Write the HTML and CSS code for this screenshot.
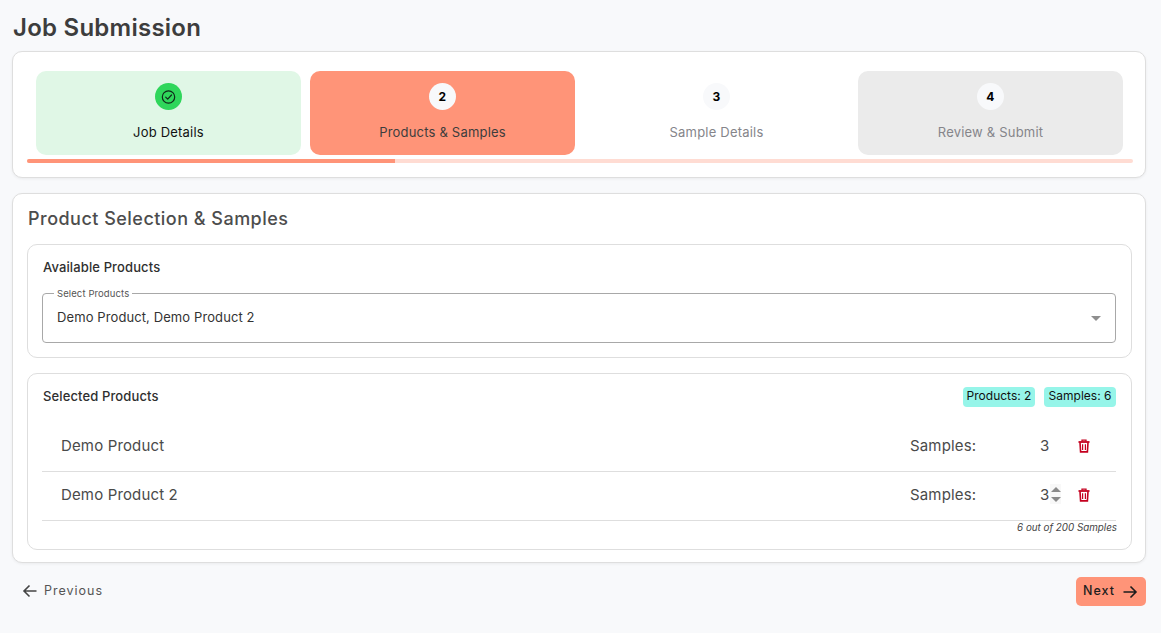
FILE: index.html
```html
<!DOCTYPE html>
<html lang="en">
<head>
    <meta charset="UTF-8">
    <meta name="viewport" content="width=device-width, initial-scale=1.0">
    <title>Job Submission</title>
    <link rel="stylesheet" href="styles.css">
</head>
<body>
    <h1 class="page-title">Job Submission</h1>

    <div class="card stepper-card">
        <div class="steps">
            <div class="step step-done">
                <span class="step-circle circle-done">
                    <svg width="16" height="16" viewBox="0 0 16 16" fill="none" stroke="#10291a" stroke-width="1.2">
                        <circle cx="7.5" cy="8" r="6.2"/>
                        <path d="M4.7 8.2l2 2 3.8-4.2" stroke-linecap="round" stroke-linejoin="round"/>
                    </svg>
                </span>
                <span class="step-label">Job Details</span>
            </div>
            <div class="step step-active">
                <span class="step-circle">2</span>
                <span class="step-label">Products &amp; Samples</span>
            </div>
            <div class="step">
                <span class="step-circle">3</span>
                <span class="step-label">Sample Details</span>
            </div>
            <div class="step step-grey">
                <span class="step-circle">4</span>
                <span class="step-label">Review &amp; Submit</span>
            </div>
        </div>
        <div class="progress"><div class="progress-fill"></div></div>
    </div>

    <div class="card main-card">
        <h2 class="section-title">Product Selection &amp; Samples</h2>

        <div class="panel available">
            <h3 class="panel-title">Available Products</h3>
            <fieldset class="select-box">
                <legend>Select Products</legend>
                <span class="select-value">Demo Product, Demo Product 2</span>
                <span class="select-arrow"></span>
            </fieldset>
        </div>

        <div class="panel selected">
            <div class="panel-head">
                <h3 class="panel-title">Selected Products</h3>
                <div class="chips">
                    <span class="chip">Products: 2</span>
                    <span class="chip">Samples: 6</span>
                </div>
            </div>

            <div class="product-row">
                <span class="product-name">Demo Product</span>
                <span class="samples-label">Samples:</span>
                <span class="samples-count">3</span>
                <svg class="trash" width="14" height="14" viewBox="0 0 14 14" fill="none" stroke="#c4001f" stroke-width="1.6">
                    <path d="M1.5 3h11" stroke-width="1.8"/>
                    <path d="M5 2.6V1.1h4v1.5" stroke-width="1.3"/>
                    <path d="M3 3.4l.6 9.5h6.8l.6-9.5"/>
                    <path d="M5.6 5.2v5.8M8.4 5.2v5.8" stroke-width="1.2"/>
                </svg>
            </div>
            <div class="product-row">
                <span class="product-name">Demo Product 2</span>
                <span class="samples-label">Samples:</span>
                <span class="samples-count">3<span class="spinner"><i class="spin-up"></i><i class="spin-down"></i></span></span>
                <svg class="trash" width="14" height="14" viewBox="0 0 14 14" fill="none" stroke="#c4001f" stroke-width="1.6">
                    <path d="M1.5 3h11" stroke-width="1.8"/>
                    <path d="M5 2.6V1.1h4v1.5" stroke-width="1.3"/>
                    <path d="M3 3.4l.6 9.5h6.8l.6-9.5"/>
                    <path d="M5.6 5.2v5.8M8.4 5.2v5.8" stroke-width="1.2"/>
                </svg>
            </div>
            <p class="samples-note">6 out of 200 Samples</p>
        </div>
    </div>

    <div class="nav-row">
        <button class="nav-btn prev-btn">
            <svg width="16" height="16" viewBox="0 0 16 16" fill="none" stroke="#444" stroke-width="1.6">
                <path d="M14.5 8H2M7.5 2.5L2 8l5.5 5.5"/>
            </svg>
            Previous
        </button>
        <button class="nav-btn next-btn">
            Next
            <svg width="16" height="16" viewBox="0 0 16 16" fill="none" stroke="#1d1d1d" stroke-width="1.6">
                <path d="M1.5 8H14M8.5 2.5L14 8l-5.5 5.5"/>
            </svg>
        </button>
    </div>
</body>
</html>
```

FILE: styles.css
```css
* {
    box-sizing: border-box;
}
body {
    font-family: Inter, "Open Sans", sans-serif;
    margin: 0;
    padding: 13px 15px 0 12px;
    background-color: #f8f9fb;
    color: #333;
    overflow: hidden;
}
.page-title {
    margin: 0 0 9px 1px;
    font-size: 24px;
    line-height: 29px;
    font-weight: 600;
    letter-spacing: 0.25px;
    color: #3d3d3d;
}
.card {
    background-color: #fff;
    border: 1px solid #dedede;
    border-radius: 10px;
    box-shadow: 0 1px 3px rgba(0, 0, 0, 0.06);
}
.stepper-card {
    height: 127px;
    padding: 19px 12px 0 14px;
    margin-bottom: 15px;
}
.steps {
    display: flex;
    gap: 9px;
    padding: 0 10px 0 9px;
}
.step {
    flex: 1;
    height: 84px;
    border-radius: 10px;
    display: flex;
    flex-direction: column;
    align-items: center;
    padding-top: 12px;
    color: #85858a;
    font-size: 13px;
    letter-spacing: 0.2px;
}
.step-done {
    background-color: #e0f7e6;
    color: #111;
}
.step-active {
    background-color: #ff9478;
    color: #3d3d3d;
}
.step-grey {
    background-color: #ebebeb;
}
.step-circle {
    width: 27px;
    height: 27px;
    border-radius: 50%;
    background-color: #f8f9fb;
    display: flex;
    align-items: center;
    justify-content: center;
    color: #000;
    font-size: 12px;
    font-weight: 700;
    margin-bottom: 14px;
}
.circle-done {
    background-color: #2fd65b;
}
.step-label {
    line-height: 16px;
}
.progress {
    height: 4px;
    margin-top: 4px;
    background-color: #ffdcd3;
    border-radius: 2px;
}
.progress-fill {
    width: 33.3%;
    height: 100%;
    background-color: #ff9478;
    border-radius: 2px 0 0 2px;
}
.main-card {
    height: 370px;
    padding: 13px 13px 0 14px;
}
.section-title {
    margin: 0 0 13px 1px;
    font-size: 18px;
    line-height: 24px;
    font-weight: 500;
    letter-spacing: 0.48px;
    color: #4d4d4d;
}
.panel {
    border: 1px solid #dedede;
    border-radius: 10px;
    padding: 0 15px 0 14px;
}
.available {
    height: 114px;
    padding-top: 13px;
    margin-bottom: 15px;
}
.panel-title {
    margin: 0 0 0 1px;
    font-size: 13px;
    line-height: 18px;
    font-weight: 500;
    letter-spacing: 0.12px;
    color: #2f2f2f;
}
.select-box {
    position: relative;
    margin: 0;
    margin-top: 12px;
    height: 55px;
    padding: 0 14px;
    border: 1px solid #a8a8a8;
    border-radius: 4px;
    display: flex;
    align-items: center;
}
.select-box legend {
    padding: 0 3px;
    margin-left: -3px;
    font-size: 9.5px;
    line-height: 11px;
    letter-spacing: 0.1px;
    color: #555;
}
.select-value {
    font-size: 13px;
    letter-spacing: 0.1px;
    color: #333;
    padding-bottom: 7px;
}
.select-arrow {
    position: absolute;
    right: 14px;
    top: 17px;
    border-left: 5px solid transparent;
    border-right: 5px solid transparent;
    border-top: 5px solid #8f8f8f;
}
.selected {
    height: 177px;
    padding-top: 13px;
}
.panel-head {
    display: flex;
    justify-content: space-between;
    align-items: center;
    height: 20px;
    margin-bottom: 14px;
}
.panel-head .panel-title {
    margin-bottom: 2px;
}
.chips {
    display: flex;
    gap: 9px;
}
.chip {
    width: 72px;
    height: 20px;
    background-color: #96f5e9;
    border-radius: 4px;
    font-size: 12px;
    line-height: 18px;
    text-align: center;
    color: #111;
    white-space: nowrap;
}
.product-row {
    display: flex;
    align-items: center;
    height: 51px;
    padding: 0 25px 1px 19px;
    border-bottom: 1px solid #dedede;
    color: #4a4a4a;
    font-size: 15px;
    letter-spacing: 0.15px;
}
.product-row + .product-row {
    height: 49px;
    padding-bottom: 3px;
}
.product-name {
    flex: 1;
}
.samples-label {
    width: 130px;
}
.samples-count {
    position: relative;
    width: 37px;
    font-size: 15px;
}
.spinner {
    position: absolute;
    left: 10px;
    top: -1px;
    width: 11px;
    height: 20px;
    background-color: #f8f8f8;
    display: flex;
    flex-direction: column;
    align-items: center;
    justify-content: center;
    gap: 5px;
}
.spin-up {
    border-left: 5px solid transparent;
    border-right: 5px solid transparent;
    border-bottom: 5px solid #8a8a8a;
}
.spin-down {
    border-left: 5px solid transparent;
    border-right: 5px solid transparent;
    border-top: 5px solid #8a8a8a;
}
.samples-note {
    margin: 1px -1px 0 0;
    text-align: right;
    font-size: 9.8px;
    line-height: 12px;
    font-style: italic;
    color: #444;
}
.nav-row {
    display: flex;
    justify-content: space-between;
    align-items: center;
    margin-top: 14px;
    height: 29px;
}
.nav-btn {
    display: flex;
    align-items: center;
    border: none;
    background: none;
    font-family: inherit;
    font-size: 12.5px;
    letter-spacing: 1px;
    cursor: pointer;
}
.prev-btn {
    gap: 6px;
    padding: 0 0 2px 10px;
    color: #555;
}
.next-btn {
    width: 70px;
    height: 29px;
    gap: 7px;
    padding: 0 0 2px 7px;
    background-color: #ff9478;
    border-radius: 5px;
    font-weight: 500;
    color: #1d1d1d;
}
.next-btn svg {
    margin-top: 2px;
}
```
